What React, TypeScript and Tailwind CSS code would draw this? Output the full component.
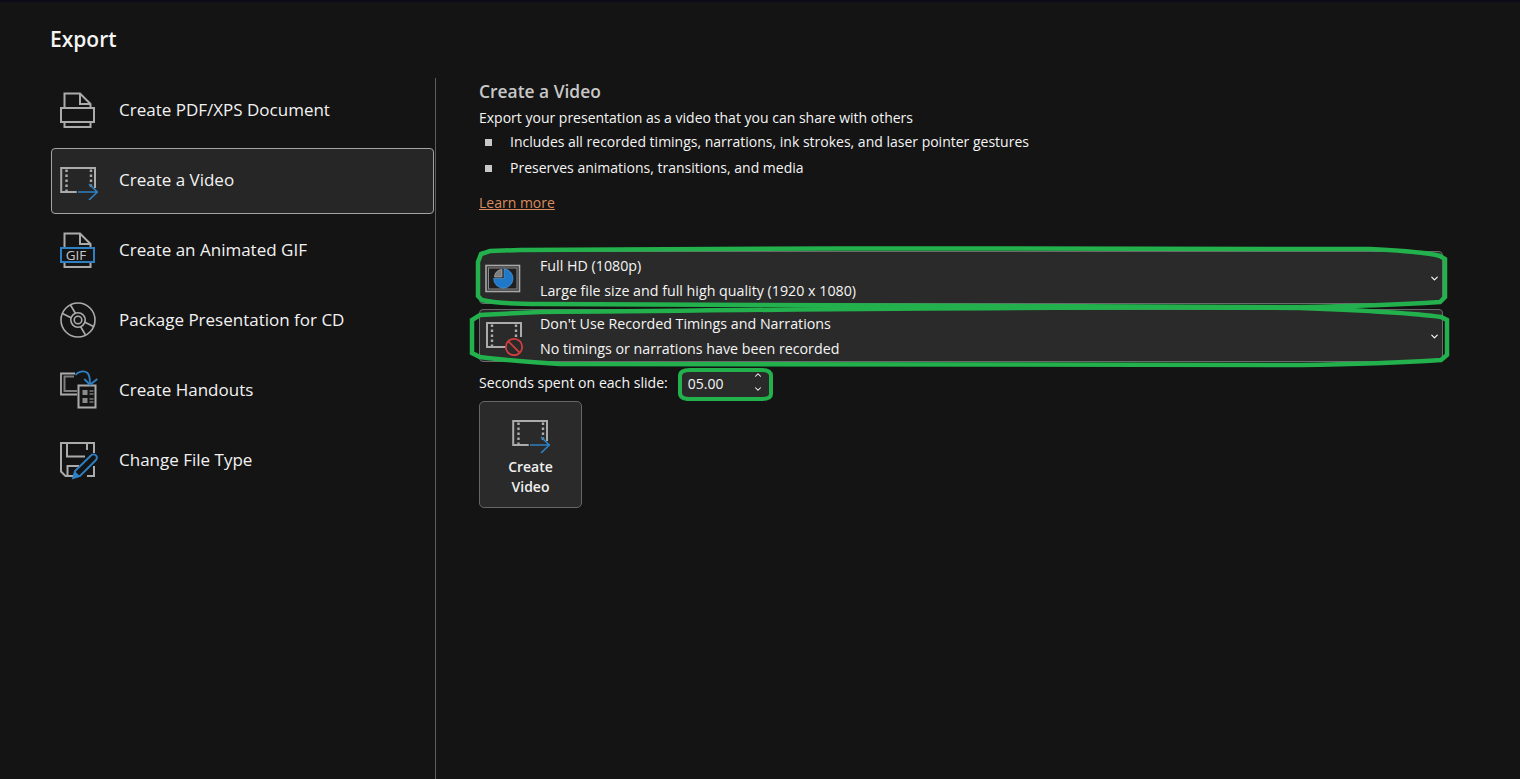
import type { ReactNode } from "react";
import { ChevronDown, ChevronUp } from "lucide-react";

const GRAY = "#ababab";
const BLUE = "#2f80c2";

function FilmFrame() {
  return (
    <>
      <path d="M17.7 32H2.2V8H36V28" fill="none" stroke={GRAY} strokeWidth="2" />
      <path d="M7.5 9.5V32M32 9.5V28" fill="none" stroke={GRAY} strokeWidth="2.4" strokeDasharray="2.5 2.5" />
    </>
  );
}

function VideoArrow() {
  return (
    <>
      <FilmFrame />
      <path d="M19 32H38M30 24l8.3 8-8.3 8" fill="none" stroke={BLUE} strokeWidth="1.6" />
    </>
  );
}

function PageTop() {
  return <path d="M5.5 18V3.5H21L31.5 14V18M21 3.5V14H31.5" fill="none" stroke={GRAY} strokeWidth="2" />;
}

const icons: Record<string, ReactNode> = {
  pdf: (
    <>
      <PageTop />
      <rect x="2" y="18" width="33" height="14" fill="none" stroke={GRAY} strokeWidth="2" />
      <path d="M5.5 32V37H31.5V32" fill="none" stroke={GRAY} strokeWidth="2" />
    </>
  ),
  video: <VideoArrow />,
  gif: (
    <>
      <PageTop />
      <path d="M5.5 32V37H31.5V32" fill="none" stroke={GRAY} strokeWidth="2" />
      <rect x="2" y="18" width="33" height="14" fill="#141414" stroke={BLUE} strokeWidth="2" />
      <text x="17" y="30" textAnchor="middle" fontSize="13.5" fill="#c9c9c9" fontFamily="'Open Sans', sans-serif">GIF</text>
    </>
  ),
  cd: (
    <g fill="none" stroke={GRAY} strokeWidth="1.6">
      <circle cx="19" cy="20" r="17" />
      <circle cx="19" cy="20" r="7.2" />
      <circle cx="19" cy="20" r="3.8" />
      <path d="M12.5 18L3.5 13.5M16.5 13.5L11.5 5M25.5 22L34.5 26.5M21.5 26.5L26.5 35" />
    </g>
  ),
  handouts: (
    <>
      <path d="M16 3.5H2V24.5H18" fill="none" stroke={GRAY} strokeWidth="1.8" />
      <path d="M15 6.5H5.5V21H18" fill="none" stroke="#7d7d7d" strokeWidth="2" />
      <rect x="19.5" y="15.5" width="17" height="22" fill="#141414" stroke={GRAY} strokeWidth="2" />
      <rect x="23.5" y="20" width="5" height="5" fill="#8a8a8a" />
      <rect x="23.5" y="28" width="5" height="5" fill="#8a8a8a" />
      <path d="M30.5 21h4M30.5 24h4M30.5 29h4M30.5 32h4" stroke={GRAY} strokeWidth="1.2" />
      <path d="M16.5 5C19 1.5 25 0 28.5 3C30.5 5 31 9 31 14" fill="none" stroke={BLUE} strokeWidth="1.8" />
      <path d="M25.3 9L31 14.7L38.3 9" fill="none" stroke={BLUE} strokeWidth="1.8" />
    </>
  ),
  save: (
    <>
      <path d="M35 13V3H2V31.5L6.5 36H17M28 36H35V26" fill="none" stroke={GRAY} strokeWidth="2" />
      <path d="M8 3V16.5H26M28 3V10M8.5 36V26H20" fill="none" stroke={GRAY} strokeWidth="2" />
      <path d="M14.5 37.5L16 31L32 15.5C33.5 14 36 14 37 15.5C38.5 17 38 19 36.5 20.5L21 36Z" fill="#141414" stroke={BLUE} strokeWidth="1.9" />
      <path d="M13 39.5L15.5 31L21.5 36.5Z" fill={BLUE} />
    </>
  ),
};

const items = [
  { key: "pdf", label: "Create PDF/XPS Document" },
  { key: "video", label: "Create a Video", active: true },
  { key: "gif", label: "Create an Animated GIF" },
  { key: "cd", label: "Package Presentation for CD" },
  { key: "handouts", label: "Create Handouts" },
  { key: "save", label: "Change File Type" },
];

function Icon({ children, className }: { children: ReactNode; className?: string }) {
  return (
    <svg viewBox="0 0 40 40" width="40" height="40" className={className}>
      {children}
    </svg>
  );
}

function Dropdown({ icon, title, sub, className }: { icon: ReactNode; title: string; sub: string; className?: string }) {
  return (
    <div className={`flex h-[53px] items-center rounded-[4px] border border-[#6a6a6a] bg-[#2a2a2a] pl-[5px] pr-[2px] ${className ?? ""}`}>
      <Icon className="shrink-0">{icon}</Icon>
      <div className="ml-[15px] flex-1 text-[14.25px] leading-[25px] text-[#f5f5f5]">
        <div>{title}</div>
        <div>{sub}</div>
      </div>
      <ChevronDown size={11} strokeWidth={2.5} className="mt-[2px] text-white" />
    </div>
  );
}

export default function App() {
  return (
    <div className="relative h-[779px] w-[1520px] overflow-hidden bg-[#141414] font-['Open_Sans',sans-serif]">
      <div className="h-[2px] bg-[#0b0c17]" />
      <h1 className="pl-[50px] pt-[22px] pb-[24px] text-[21px] leading-[30px] font-semibold text-[#f5f5f5]">Export</h1>

      <div className="flex h-[701px]">
        <aside className="flex w-[436px] shrink-0 flex-col gap-1 border-r border-[#5c5c5c] pl-[51px] pr-px">
          {items.map((item) => (
            <div
              key={item.key}
              className={`flex h-[66px] items-center rounded-[4px] border pb-[2px] pl-[7px] ${item.active ? "border-[#a3a3a3] bg-[#262626]" : "border-transparent"}`}
            >
              <Icon className="shrink-0">{icons[item.key]}</Icon>
              <span className="ml-[20px] text-[17px] text-[#f2f2f2]">{item.label}</span>
            </div>
          ))}
        </aside>

        <main className="ml-[43px] w-[964px] pt-[1px]">
          <h2 className="text-[17.4px] leading-[24px] font-semibold text-[#c8c8c8]">Create a Video</h2>
          <p className="mt-[4px] text-[14px] leading-[22px] text-[#f5f5f5]">Export your presentation as a video that you can share with others</p>
          <ul className="text-[14px] leading-[22px] text-[#f5f5f5]">
            <li className="mt-[2px] flex items-center">
              <span className="ml-[6px] h-[7px] w-[7px] bg-[#c8c8c8]" />
              <span className="ml-[18px]">Includes all recorded timings, narrations, ink strokes, and laser pointer gestures</span>
            </li>
            <li className="mt-[4px] flex items-center">
              <span className="ml-[6px] h-[7px] w-[7px] bg-[#c8c8c8]" />
              <span className="ml-[18px]">Preserves animations, transitions, and media</span>
            </li>
          </ul>
          <a className="mt-[13px] block w-fit text-[14px] leading-[22px] text-[#d98c5f] underline">Learn more</a>

          <Dropdown
            className="mt-[37px]"
            title="Full HD (1080p)"
            sub="Large file size and full high quality (1920 x 1080)"
            icon={
              <>
                <rect x="1" y="7.5" width="33.5" height="26" fill="#333333" stroke="#a8a8a8" strokeWidth="1.6" />
                <rect x="3.5" y="10" width="28.5" height="21" fill="#1f1f1f" stroke="#8c8c8c" strokeWidth="1" />
                <path d="M19 10.8A9.7 9.7 0 1 1 8.6 20.5H19Z" fill="#1f78c8" stroke="#5aa3dc" strokeWidth="0.6" />
                <path d="M17 11.5A7.5 7.5 0 0 0 9.5 19H17Z" fill="#7d7d7d" stroke="#a8a8a8" strokeWidth="0.8" />
              </>
            }
          />
          <Dropdown
            className="mt-[5px]"
            title="Don't Use Recorded Timings and Narrations"
            sub="No timings or narrations have been recorded"
            icon={
              <>
                <path d="M21 31H2V7H36V21" fill="none" stroke={GRAY} strokeWidth="2" />
                <path d="M7 8.5V31M31 8.5V21" fill="none" stroke={GRAY} strokeWidth="2.4" strokeDasharray="2.5 2.5" />
                <circle cx="29" cy="31" r="8.2" fill="#2a2a2a" stroke="#d13f3f" strokeWidth="1.8" />
                <path d="M23.4 25.4L34.6 36.6" stroke="#d13f3f" strokeWidth="1.8" />
              </>
            }
          />

          <div className="mt-[10px] flex h-[25px] items-center">
            <span className="pb-[3px] text-[14.1px] text-[#f5f5f5]">Seconds spent on each slide:</span>
            <div className="relative ml-[13px] flex h-[25px] w-[89px] items-center rounded-[4px] bg-[#2a2a2a] pb-[2px] pl-[7px] text-[14px] text-[#f5f5f5]">
              05.00
              <ChevronUp size={10} strokeWidth={2.5} className="absolute right-[7px] top-[-2px] text-white" />
              <ChevronDown size={10} strokeWidth={2.5} className="absolute right-[7px] top-[12px] text-white" />
            </div>
          </div>

          <button className="mt-[4px] flex h-[107px] w-[103px] flex-col items-center rounded-[5px] border border-[#666666] bg-[#2a2a2a] pt-[11px]">
            <Icon><VideoArrow /></Icon>
            <span className="mt-[4px] text-[14px] leading-[20px] font-semibold text-[#f0f0f0]">
              Create<br />Video
            </span>
          </button>
        </main>
      </div>

      {/* marker outlines someone drew on top of the screenshot */}
      <svg className="pointer-events-none absolute inset-0" width="1520" height="779" fill="none" stroke="#22b14c" strokeWidth="4.5">
        <path d="M520 250C800 248 1200 247 1370 249C1410 251 1430 253 1440 256L1445 259V297L1440 302C1410 304 1380 306 1300 307C1000 307 700 305 540 304C510 304 490 302 482 300L478 296V262L481 254L490 251Z" />
        <path d="M540 312C800 310 1000 306 1300 308C1380 311 1420 314 1441 317L1447 320V355L1441 360C1410 362 1370 364 1300 365C1000 365 700 365 560 364C530 362 500 360 480 357L472 353V320L480 315Z" />
        <path d="M690 370H762C768 370 771 372 771 376V394C771 397 769 399 762 399H690C684 399 680 397 680 393V376C680 372 684 370 690 370Z" strokeWidth="4" />
      </svg>
    </div>
  );
}
